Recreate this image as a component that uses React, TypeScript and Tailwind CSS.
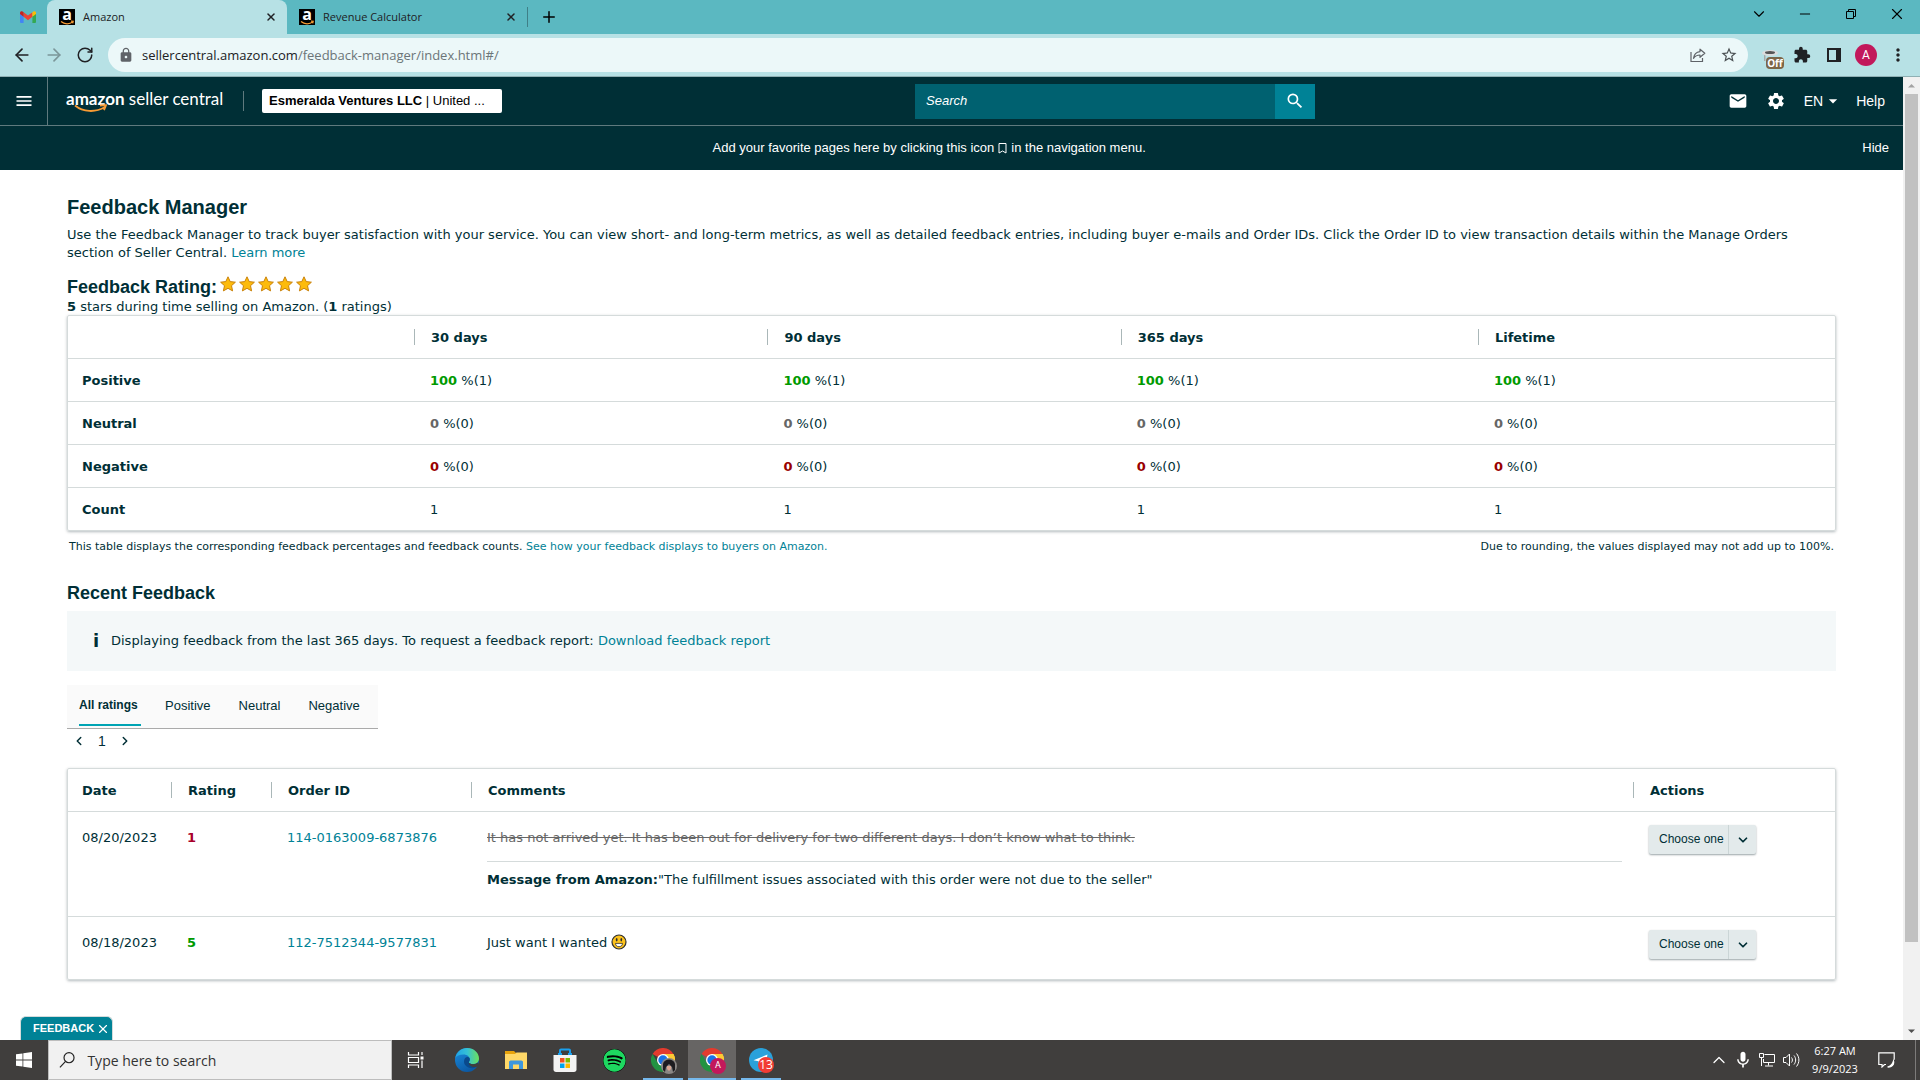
import React from 'react';
import { ArrowLeft, ArrowRight, RotateCw, Plus, Minus, X, ChevronDown, ChevronLeft, ChevronRight, ChevronUp } from 'lucide-react';
import { MdMail, MdSettings, MdSearch, MdLock, MdExtension, MdMoreVert, MdStarBorder, MdMenu, MdArrowDropDown, MdMic } from 'react-icons/md';
import { FaSpotify } from 'react-icons/fa';

interface MetricRow {
  label: string;
  color: string;
  values: [string, string][];
}

interface FeedbackEntry {
  date: string;
  rating: string;
  ratingColor: string;
  orderId: string;
  comment: string;
  struck: boolean;
  message?: string;
}

const periods = ['30 days', '90 days', '365 days', 'Lifetime'];

const metrics: MetricRow[] = [
  { label: 'Positive', color: 'text-[#009a00]', values: periods.map(() => ['100', ' %(1)']) },
  { label: 'Neutral', color: 'text-[#666666]', values: periods.map(() => ['0', ' %(0)']) },
  { label: 'Negative', color: 'text-[#990000]', values: periods.map(() => ['0', ' %(0)']) },
  { label: 'Count', color: '', values: periods.map(() => ['', '1']) },
];

const entries: FeedbackEntry[] = [
  {
    date: '08/20/2023',
    rating: '1',
    ratingColor: 'text-[#a8002a]',
    orderId: '114-0163009-6873876',
    comment: 'It has not arrived yet. It has been out for delivery for two different days. I don’t know what to think.',
    struck: true,
    message: '"The fulfillment issues associated with this order were not due to the seller"',
  },
  {
    date: '08/18/2023',
    rating: '5',
    ratingColor: 'text-[#009a00]',
    orderId: '112-7512344-9577831',
    comment: 'Just want I wanted',
    struck: false,
  },
];

const link = 'text-[#008296]';

/* ---------- drawings ---------- */

const GmailIcon = () => (
  <svg viewBox="0 0 16 12" className="w-4 h-3">
    <path d="M0 1.5V11a1 1 0 0 0 1 1h2.6V5.5z" fill="#4285f4" />
    <path d="M16 1.5V11a1 1 0 0 1-1 1h-2.6V5.5z" fill="#34a853" />
    <path d="M3.6 1.2 8 4.6l4.4-3.4v4.6L8 9.2 3.6 5.8z" fill="#ea4335" />
    <path d="M0 2c0-1.800 2-2.500 3.600-.8v4.600L0 3z" fill="#c5221f" />
    <path d="M16 2c0-1.800-2-2.500-3.600-.8v4.600L16 3z" fill="#fbbc04" />
  </svg>
);

const AmazonFavicon = () => (
  <span className="relative flex w-4 h-4 justify-center bg-black text-white shrink-0">
    <span className="font-['Open_Sans',sans-serif] font-bold text-base leading-[11px]">a</span>
    <svg viewBox="0 0 16 16" className="absolute inset-0 w-4 h-4" fill="none" stroke="#f79b34" strokeWidth="1.200">
      <path d="M2 12.500c3.500 3 8.500 3 12 .3M12 12.200l2.200.2-.5 2" />
    </svg>
  </span>
);

const ShareIcon = () => (
  <svg viewBox="0 0 16 16" className="w-4 h-4" fill="none" stroke="#5f6368" strokeWidth="1.200">
    <path d="M1 5v9.500h11.500V11" />
    <path d="M10 2.200 14.800 6.300 10 10.300V8C7 8 5 9 3.500 11.300 4 7.500 6.300 5 10 4.600z" strokeLinejoin="round" />
  </svg>
);

const RestoreIcon = () => (
  <svg viewBox="0 0 12 12" className="w-3 h-3" fill="none" stroke="#000" strokeWidth="1">
    <path d="M1.500 3.500h7v7h-7zM3.500 3.500v-2h7v7h-2" />
  </svg>
);

const CloserExtension = () => (
  <span className="relative block w-6 h-6">
    <svg viewBox="0 0 24 24" className="w-6 h-6">
      <path d="M5 9h2.500v9H6V12z" fill="#a9a9a9" />
      <ellipse cx="12" cy="10" rx="8" ry="3" fill="#dcdcdc" />
      <ellipse cx="12" cy="9.500" rx="5" ry="1.500" fill="#555" />
    </svg>
    <span className="absolute left-2 top-3.5 w-[18px] h-3 rounded-sm bg-[#7d6648] text-white font-['Open_Sans',sans-serif] font-bold text-[10px] leading-3 text-center">Off</span>
  </span>
);

const Star = () => (
  <svg viewBox="0 0 16 16" className="w-4 h-4">
    <path d="M8 .8l2.200 4.800 5.200.6-3.900 3.500 1.100 5.200L8 12.300l-4.600 2.600 1.100-5.200L.6 6.200l5.200-.6z" fill="#fdbb0c" stroke="#c9820c" strokeWidth="1" strokeLinejoin="round" />
  </svg>
);

const Smiley = () => (
  <svg viewBox="0 0 16 16" className="inline w-4 h-4 align-text-bottom">
    <circle cx="8" cy="8" r="7" fill="#fcc21b" stroke="#2f2f2f" strokeWidth="1.200" />
    <ellipse cx="5.700" cy="5.700" rx=".9" ry="1.800" fill="#2f2f2f" />
    <ellipse cx="10.300" cy="5.700" rx=".9" ry="1.800" fill="#2f2f2f" />
    <path d="M4.500 9.400h7c0 4.400-7 4.400-7 0z" fill="#fff" stroke="#2f2f2f" strokeWidth=".8" />
  </svg>
);

const WindowsLogo = () => (
  <svg viewBox="0 0 16 16" className="w-4 h-4" fill="#fff">
    <path d="M0 2.300 6.500 1.400v6.200H0zM7.300 1.300 16 0v7.600H7.300zM0 8.400h6.500v6.200L0 13.700zM7.300 8.400H16V16l-8.700-1.300z" />
  </svg>
);

const TaskViewIcon = () => (
  <svg viewBox="0 0 18 16" className="w-[18px] h-4" fill="none" stroke="#fff" strokeWidth="1.200">
    <path d="M1.500 0v3h10V0M1.500 16v-3h10v3M1.500 5.500h10v5h-10zM15 0v3M15 8.500V16" />
    <path d="M13.500 4.500h3v3h-3z" fill="#fff" stroke="none" />
  </svg>
);

const EdgeIcon = () => (
  <svg viewBox="0 0 24 24" className="w-6 h-6">
    <defs>
      <linearGradient id="edgeTop" x1="0" y1="0.500" x2="1" y2="0.500">
        <stop offset="0" stopColor="#1fa2e8" />
        <stop offset="0.500" stopColor="#35c1d6" />
        <stop offset="1" stopColor="#6ce05a" />
      </linearGradient>
      <linearGradient id="edgeBody" x1="0" y1="0" x2="0.500" y2="1">
        <stop offset="0" stopColor="#1b8fe0" />
        <stop offset="1" stopColor="#0c59a4" />
      </linearGradient>
    </defs>
    <circle cx="12" cy="12" r="12" fill="url(#edgeBody)" />
    <path d="M.3 10C1.500 4 6.200 0 12 0c7 0 12 5 12 10.500 0 3.500-2.600 5.700-5.700 5.700-3.200 0-4.500-1.200-4.500-2 0-.6 1-1 1-3 0-2.400-2.600-4.700-6.300-4.700C4.500 6.500 1.500 8 .3 10z" fill="url(#edgeTop)" />
    <path d="M14.800 11.200c0 2-1 2.400-1 3 0 .8 1.300 2 4.500 2 1.600 0 2.900-.4 3.900-1.200l1.300.8c-.8 1.500-2 3-3.500 4-5.500 1.500-11-1.500-11-6.300 0-2.500 1.500-4.500 3.500-4.500 1.400 0 2.300 1 2.300 2.200z" fill="#0a4a8c" />
    <path d="M13.800 14.200c0 .8 1.300 2 4.500 2 2 0 3.500-.6 4.500-1.600l1.200 2.400-2.200 1.800c-4 1-8.500-1-8-4.600z" fill="#403e3d" />
  </svg>
);

const FolderIcon = () => (
  <svg viewBox="0 0 22 18" className="w-[22px] h-[18px]">
    <path d="M0 0h9l2 2h11v16H0z" fill="#e8a30c" />
    <path d="M0 3h10l1.500-1.500H22V18H0z" fill="#ffd868" />
    <path d="M4 18v-7.500L5.500 9.500h11l1.500 1V18h-4v-4.500H8V18z" fill="#3e97dc" />
  </svg>
);

const StoreIcon = () => (
  <svg viewBox="0 0 24 24" className="w-6 h-6">
    <path d="M.5 7h23v14.500c0 1.500-1 2.500-2.500 2.500H3C1.500 24 .5 23 .5 21.500z" fill="#f3f3f3" />
    <path d="M7 7V2.500C7 1.500 7.500 1.500 8 1.500h8c.5 0 1 0 1 1V7" fill="none" stroke="#1aa0ee" strokeWidth="2" />
    <path d="M5 5h4v2H5zM15 5h4v2h-4z" fill="#1aa0ee" />
    <path d="M7 10h4.500v4.500H7z" fill="#f25022" />
    <path d="M12.500 10H17v4.500h-4.500z" fill="#7fba00" />
    <path d="M7 15.500h4.500V20H7z" fill="#00a4ef" />
    <path d="M12.500 15.500H17V20h-4.500z" fill="#ffb900" />
  </svg>
);

const ChromeIcon = () => (
  <svg viewBox="0 0 24 24" className="w-6 h-6">
    <path d="M12 12 1.600 6A12 12 0 0 1 22.400 6z" fill="#e33b2e" />
    <path d="M12 12V6h10.400A12 12 0 0 1 12 24z" fill="#fcc934" />
    <path d="M17.200 15 12 24A12 12 0 0 1 1.600 6l5.200 9z" fill="#229342" />
    <path d="M17.200 15 12 24a12 12 0 0 0 10.400-18H12z" fill="#fcc934" />
    <circle cx="12" cy="12" r="6" fill="#fff" />
    <circle cx="12" cy="12" r="4.700" fill="#1a73e8" />
  </svg>
);

const TelegramIcon = () => (
  <svg viewBox="0 0 24 24" className="w-6 h-6">
    <circle cx="12" cy="12" r="12" fill="#2aa1da" />
    <path d="M4.500 12.200 18.500 6.500 16.500 17l-4.500-2.700-2 2-.5-3z" fill="#fff" />
  </svg>
);

const ProfilePhoto = () => (
  <svg viewBox="0 0 16 16" className="absolute left-2.5 top-2.5 w-4 h-4">
    <circle cx="8" cy="8" r="8" fill="#8a8785" />
    <path d="M2 12V6c1-6 11-6 12 0v6l-2 2-1-5-3-3-3 3-1 5z" fill="#1d1c20" />
    <path d="M6 8h4v3L8 13l-2-2z" fill="#d9a592" />
  </svg>
);

const NetworkIcon = () => (
  <svg viewBox="0 0 16 14" className="w-4 h-3.5" fill="none" stroke="#fff" strokeWidth="1">
    <path d="M5.500 1.500h10v8h-11V6M9.500 9.500v3M6 13h8M.5 .5h4v4h-4zM2.500 4.500V13" />
  </svg>
);

const VolumeIcon = () => (
  <svg viewBox="0 0 17 14" className="w-[17px] h-3.5" fill="none" stroke="#fff" strokeWidth="1">
    <path d="M.5 4.500h2.500L6.500 1v12L3 9.500H.5zM8.500 4.500c1.200 1.500 1.200 3.500 0 5M11 2.500c2.200 2.800 2.200 6.200 0 9M13.500 .5c3.200 4 3.200 9 0 13" />
  </svg>
);

const NotificationIcon = () => (
  <svg viewBox="0 0 17 16" className="w-[17px] h-4" fill="none" stroke="#fff" strokeWidth="1.200">
    <path d="M8 12.500H6.500L4 15v-2.500H.8V.8h15.400v7" />
    <path d="M15.500 9c1 4-2 6.500-6 6 3-.5 5-2.500 6-6z" fill="#fff" />
  </svg>
);

/* ---------- browser ---------- */

const BrowserTab = ({ title, active }: { title: string; active?: boolean }) => (
  <div className={`flex items-center w-60 h-full pl-3 pr-2.5 text-[#202124] ${active ? 'bg-[#b7e1e5] rounded-t-lg' : ''}`}>
    <AmazonFavicon />
    <span className="ml-2 grow font-['Open_Sans',sans-serif] text-[11px]">{title}</span>
    <button aria-label={`Close ${title}`}>
      <X className="w-3 h-3" strokeWidth={3} />
    </button>
  </div>
);

const TabStrip = () => (
  <div className="flex h-[34px] bg-[#5bb8c1]">
    <div className="flex items-center justify-center w-[47px] pl-2">
      <GmailIcon />
    </div>
    <BrowserTab title="Amazon" active />
    <BrowserTab title="Revenue Calculator" />
    <div className="w-px h-5 mt-[7px] bg-[#3f7f87]"></div>
    <button aria-label="New tab" className="px-3">
      <Plus className="w-[18px] h-[18px]" strokeWidth={2} />
    </button>
    <div className="ml-auto flex items-start pt-1.5 text-black">
      <button aria-label="Search tabs" className="flex w-[46px] h-4 items-center justify-center"><ChevronDown className="w-[18px] h-[18px]" strokeWidth={1.5} /></button>
      <button aria-label="Minimize" className="flex w-[46px] h-4 items-center justify-center"><Minus className="w-4 h-4" strokeWidth={1.5} /></button>
      <button aria-label="Restore" className="flex w-[46px] h-4 items-center justify-center"><RestoreIcon /></button>
      <button aria-label="Close" className="flex w-[46px] h-4 items-center justify-center"><X className="w-[18px] h-[18px]" strokeWidth={1.5} /></button>
    </div>
  </div>
);

const Toolbar = () => (
  <div className="flex items-center h-[43px] bg-[#b7e1e5] border-b border-[#8fb0b4] pl-3 pr-1.5 text-[#202124]">
    <button aria-label="Back"><ArrowLeft className="w-5 h-5" strokeWidth={2} /></button>
    <button aria-label="Forward" className="ml-3 text-[#7b9699]"><ArrowRight className="w-5 h-5" strokeWidth={2} /></button>
    <button aria-label="Reload" className="ml-3"><RotateCw className="w-[18px] h-[18px]" strokeWidth={2} /></button>
    <div className="flex items-center grow h-[34px] ml-3.5 px-2.5 rounded-full bg-[#ecf8f9]">
      <MdLock className="w-4 h-4 text-[#5f6368]" />
      <p className="ml-2 pt-0.5 grow font-['Open_Sans',sans-serif] text-[13px]">
        sellercentral.amazon.com<span className="text-[#6b7578]">/feedback-manager/index.html#/</span>
      </p>
      <button aria-label="Share"><ShareIcon /></button>
      <button aria-label="Bookmark" className="ml-3.5"><MdStarBorder className="w-[18px] h-[18px] text-[#4b5154]" /></button>
    </div>
    <div className="flex items-center ml-1.5 *:flex *:w-8 *:justify-center">
      <div><CloserExtension /></div>
      <div><MdExtension className="w-[18px] h-[18px]" /></div>
      <div>
        <svg viewBox="0 0 14 14" className="w-3.5 h-3.5">
          <path d="M1 1h12v12H1z" fill="none" stroke="#202124" strokeWidth="2" />
          <path d="M9 0h5v14H9z" fill="#202124" />
        </svg>
      </div>
      <div>
        <span className="flex items-center justify-center w-[22px] h-[22px] rounded-full bg-[#c2185b] text-white font-[Roboto,sans-serif] text-xs">A</span>
      </div>
      <button aria-label="Menu"><MdMoreVert className="w-5 h-5" /></button>
    </div>
  </div>
);

/* ---------- seller central ---------- */

const SellerHeader = () => (
  <header className="bg-[#002f36] text-white font-['Liberation_Sans',Arial,sans-serif]">
    <div className="relative flex items-center h-[49px] border-b border-[#5f7a7e]">
      <button aria-label="Navigation" className="flex items-center justify-center w-12 h-full border-r border-[#5f7a7e]">
        <MdMenu className="w-5 h-5" />
      </button>
      <a href="#" className="relative ml-[18px] w-[160px] whitespace-nowrap font-[Lato,sans-serif] text-[17px] leading-6 pb-1">
        <b>amazon</b> seller central
        <svg viewBox="0 0 34 9" className="absolute left-2 top-[17px] w-[34px] h-[9px]" fill="none" stroke="#f79b34" strokeWidth="1.800">
          <path d="M1 1.500c8 6.500 20 7.500 30 1.500M26 1.500l6-.3-2 5" />
        </svg>
      </a>
      <div className="w-px h-5 ml-[17px] bg-[#5f7a7e]"></div>
      <button className="ml-[18px] w-60 h-6 rounded-xs bg-white text-black text-left text-[13px] px-[7px] whitespace-nowrap overflow-hidden">
        <b>Esmeralda Ventures LLC</b> | United ...
      </button>
      <form className="absolute left-[915px] flex w-[400px] h-[35px]">
        <input aria-label="Search" placeholder="Search" className="grow bg-[#006170] px-[11px] text-[13px] italic placeholder:text-white outline-none" />
        <button type="button" aria-label="Go" className="flex items-center justify-center w-10 bg-[#008296]">
          <MdSearch className="w-5 h-5" />
        </button>
      </form>
      <nav className="ml-auto flex items-center pr-[18px] text-sm">
        <a href="#" aria-label="Messages"><MdMail className="w-5 h-5" /></a>
        <a href="#" aria-label="Settings" className="ml-[18px]"><MdSettings className="w-5 h-5" /></a>
        <button className="flex items-center ml-[18px]">EN<MdArrowDropDown className="w-5 h-5" /></button>
        <a href="#" className="ml-[13px]">Help</a>
      </nav>
    </div>
    <div className="flex items-center h-11 text-[13px]">
      <p className="grow flex items-center justify-center">
        Add your favorite pages here by clicking this icon
        <svg viewBox="0 0 9 11" className="w-[9px] h-[11px] mx-1" fill="none" stroke="#fff" strokeWidth="1">
          <path d="M1 .5h7v9.500L4.500 8 1 10z" />
        </svg>
        in the navigation menu.
      </p>
      <button className="pl-1 pr-3.5">Hide</button>
    </div>
  </header>
);

const HeadCell = ({ children, first, className = '' }: { children?: React.ReactNode; first?: boolean; className?: string }) => (
  <th className={`h-[43px] border-b border-[#d5dbdb] p-0 text-left font-bold ${className}`}>
    <span className={`block h-4 leading-[18px] ${first ? 'pl-3.5' : 'border-l border-[#aab7b8] pl-4'}`}>{children}</span>
  </th>
);

const MetricsTable = () => (
  <div className="border border-[#d5dbdb] rounded-xs shadow-[0_1px_3px_rgba(0,28,36,0.3)]">
    <table className="w-full table-fixed border-separate border-spacing-0">
      <thead>
        <tr>
          <HeadCell first className="w-[346px]" />
          <HeadCell className="w-1/5">30 days</HeadCell>
          <HeadCell className="w-1/5">90 days</HeadCell>
          <HeadCell>365 days</HeadCell>
          <HeadCell>Lifetime</HeadCell>
        </tr>
      </thead>
      <tbody>
        {metrics.map((row) => (
          <tr key={row.label} className="group">
            <th scope="row" className="h-[43px] group-last:h-[42px] border-b border-[#d5dbdb] group-last:border-0 p-0 pt-0.5 pl-3.5 text-left font-bold">{row.label}</th>
            {row.values.map(([bold, rest], i) => (
              <td key={i} className="border-b border-[#d5dbdb] group-last:border-0 p-0 pt-0.5 pl-4">
                <b className={row.color}>{bold}</b>{rest}
              </td>
            ))}
          </tr>
        ))}
      </tbody>
    </table>
  </div>
);

const ActionSelect = ({ orderId }: { orderId: string }) => (
  <div className="relative w-[107px] h-[29px] rounded-xs bg-[#e3eaeb] shadow-[0_1px_2px_rgba(0,28,36,0.4)]">
    <select aria-label={`Action for ${orderId}`} className="w-full h-full appearance-none bg-transparent pl-2.5 pr-7 pb-0.5 font-['Liberation_Sans',Arial,sans-serif] text-xs text-[#002f36]">
      <option>Choose one</option>
    </select>
    <span className="absolute right-0 top-0 flex items-center justify-center w-7 h-full border-l border-[#cbd5d6] pointer-events-none">
      <ChevronDown className="w-3.5 h-3.5" strokeWidth={3} />
    </span>
  </div>
);

const FeedbackTable = () => (
  <div className="border border-[#d5dbdb] rounded-xs shadow-[0_1px_3px_rgba(0,28,36,0.3)]">
    <table className="w-full table-fixed border-separate border-spacing-0">
      <thead>
        <tr>
          <HeadCell first className="w-[103px]">Date</HeadCell>
          <HeadCell className="w-[100px]">Rating</HeadCell>
          <HeadCell className="w-[200px]">Order ID</HeadCell>
          <HeadCell>Comments</HeadCell>
          <HeadCell className="w-[202px]">Actions</HeadCell>
        </tr>
      </thead>
      <tbody>
        {entries.map((entry) => (
          <tr key={entry.orderId} className="group align-top [&>td]:border-b [&>td]:border-[#d5dbdb] last:[&>td]:border-0 [&>td]:pt-[17px]">
            <td className="pl-3.5">{entry.date}</td>
            <td className={`pl-4 font-bold ${entry.ratingColor}`}>{entry.rating}</td>
            <td className="pl-4"><a href="#" className={link}>{entry.orderId}</a></td>
            <td className="pl-4 pr-[11px] pb-[27px]">
              {entry.struck ? <s className="text-[#666666]">{entry.comment}</s> : <span>{entry.comment} <Smiley /></span>}
              {entry.message && (
                <p className="mt-3.5 pt-[9px] border-t border-[#d5dbdb]"><b>Message from Amazon:</b>{entry.message}</p>
              )}
            </td>
            <td className="pl-4"><div className="-mt-1"><ActionSelect orderId={entry.orderId} /></div></td>
          </tr>
        ))}
      </tbody>
    </table>
  </div>
);

const RatingTabs = () => (
  <div className="flex w-fit h-11 gap-6 pl-3 pr-[18px] bg-[#fafafa] border-b border-[#aaaaaa] font-['Liberation_Sans',Arial,sans-serif] text-[13px]">
    <button className="w-[62px] text-left border-b-2 border-[#00a4b4] mb-0.5 font-bold text-xs">All ratings</button>
    <button className="pb-0.5">Positive</button>
    <button className="ml-1 pb-0.5">Neutral</button>
    <button className="ml-1 pb-0.5">Negative</button>
  </div>
);

const FeedbackManager = () => (
  <main className="px-[67px] pt-[25px] text-[#002f36] font-['DejaVu_Sans',Verdana,sans-serif] text-[13px] leading-[18px]">
    <h1 className="font-['Liberation_Sans',Arial,sans-serif] font-bold text-xl leading-6">Feedback Manager</h1>
    <p className="mt-[7px]">
      Use the Feedback Manager to track buyer satisfaction with your service. You can view short- and long-term metrics, as well as detailed feedback entries, including buyer e-mails and Order IDs. Click the Order ID to view transaction details within the Manage Orders section of Seller Central. <a href="#" className={link}>Learn more</a>
    </p>
    <div className="flex items-center mt-3.5">
      <h2 className="font-['Liberation_Sans',Arial,sans-serif] font-bold text-lg leading-[22px]">Feedback Rating:</h2>
      <div className="flex gap-[3px] ml-[3px] pb-1.5"><Star /><Star /><Star /><Star /><Star /></div>
    </div>
    <p className="h-[17px]"><b>5</b> stars during time selling on Amazon. (<b>1</b> ratings)</p>
    <MetricsTable />
    <div className="flex justify-between mt-2 px-0.5 text-[11px] leading-4">
      <p>This table displays the corresponding feedback percentages and feedback counts. <a href="#" className={link}>See how your feedback displays to buyers on Amazon.</a></p>
      <p>Due to rounding, the values displayed may not add up to 100%.</p>
    </div>

    <h2 className="mt-[26px] font-['Liberation_Sans',Arial,sans-serif] font-bold text-lg leading-6">Recent Feedback</h2>
    <div className="flex items-center h-[60px] mt-1.5 pl-[26px] bg-[#f4f8f9]">
      <b className="w-[18px] text-lg">i</b>
      <p>Displaying feedback from the last 365 days. To request a feedback report: <a href="#" className={link}>Download feedback report</a></p>
    </div>
    <div className="mt-3.5"><RatingTabs /></div>
    <div className="flex items-center h-[23px] pl-[5px] gap-3 mb-4">
      <button aria-label="Previous page"><ChevronLeft className="w-3.5 h-3.5" strokeWidth={2.5} /></button>
      <span className="font-['Liberation_Sans',Arial,sans-serif] text-sm">1</span>
      <button aria-label="Next page"><ChevronRight className="w-3.5 h-3.5" strokeWidth={2.5} /></button>
    </div>
    <FeedbackTable />
  </main>
);

const Scrollbar = () => (
  <div className="flex flex-col items-center w-[17px] bg-[#f1f1f1] shrink-0">
    <svg viewBox="0 0 17 17" className="w-[17px] h-[17px]"><path d="M5 10.500h7L8.500 7z" fill="#a3a3a3" /></svg>
    <div className="w-[13px] h-[848px] bg-[#c1c1c1]"></div>
    <svg viewBox="0 0 17 17" className="w-[17px] h-[17px] mt-auto"><path d="M5 6.500h7L8.500 10z" fill="#505050" /></svg>
  </div>
);

/* ---------- taskbar ---------- */

const TaskButton = ({ label, state, children }: { label: string; state?: 'open' | 'active'; children: React.ReactNode }) => (
  <button
    aria-label={label}
    className={`relative flex items-center justify-center w-12 h-full ${state === 'active' ? 'bg-[#676564] border-b-2 border-[#76b9ed] pt-0.5' : ''}`}
  >
    <span className="relative block">{children}</span>
    {state === 'open' && <span className="absolute bottom-0 left-1 right-1 h-0.5 bg-[#76b9ed]"></span>}
  </button>
);

const Taskbar = () => (
  <footer className="flex items-center h-10 bg-[#403e3d] text-white font-['Open_Sans',sans-serif]">
    <TaskButton label="Start"><WindowsLogo /></TaskButton>
    <label className="flex items-center w-[344px] h-full px-2.5 bg-[#f1f1f1] border border-[#bdbdbd] text-[#333]">
      <svg viewBox="0 0 18 18" className="w-[18px] h-[18px]" fill="none" stroke="#222" strokeWidth="1.300">
        <circle cx="11" cy="6.500" r="5.500" />
        <path d="M7.200 10.500 1 17" />
      </svg>
      <input aria-label="Type here to search" placeholder="Type here to search" className="ml-3 pt-0.5 w-full bg-transparent text-sm placeholder:text-[#333] outline-none" />
    </label>
    <div className="flex h-full mr-[3px]"><TaskButton label="Task view"><TaskViewIcon /></TaskButton></div>
    <div className="flex h-full gap-px">
      <TaskButton label="Edge"><EdgeIcon /></TaskButton>
      <TaskButton label="File Explorer"><FolderIcon /></TaskButton>
      <TaskButton label="Store"><StoreIcon /></TaskButton>
      <TaskButton label="Spotify"><FaSpotify className="w-[23px] h-[23px] text-[#1ed760] bg-black rounded-full" /></TaskButton>
      <TaskButton label="Chrome" state="open"><ChromeIcon /><ProfilePhoto /></TaskButton>
      <TaskButton label="Chrome, profile A" state="active">
        <ChromeIcon />
        <span className="absolute left-2.5 top-2.5 flex items-center justify-center w-4 h-4 rounded-full bg-[#c2185b] text-[9px] font-[Roboto,sans-serif]">A</span>
      </TaskButton>
      <TaskButton label="Telegram" state="open">
        <TelegramIcon />
        <span className="absolute left-[9px] top-[9px] flex items-center justify-center w-4 h-4 rounded-full bg-[#f23c34] text-xs leading-4">13</span>
      </TaskButton>
    </div>
    <div className="ml-auto flex items-center h-full">
      <ChevronUp className="w-5 h-5" strokeWidth={1.5} />
      <MdMic className="w-5 h-5 ml-1" />
      <div className="ml-1.5"><NetworkIcon /></div>
      <div className="ml-2"><VolumeIcon /></div>
      <div className="w-[70px] text-center text-[11px] leading-[18px]">
        <p>6:27 AM</p>
        <p>9/9/2023</p>
      </div>
      <div className="ml-2"><NotificationIcon /></div>
      <div className="ml-5 w-[5px] h-full border-l border-[#7d7b7a]"></div>
    </div>
  </footer>
);

export default function App() {
  return (
    <div className="flex flex-col min-h-screen bg-white">
      <TabStrip />
      <Toolbar />
      <div className="flex grow">
        <div className="relative grow min-w-0">
          <SellerHeader />
          <FeedbackManager />
          <button className="absolute left-5 bottom-0 flex items-center h-6 w-[93px] pl-3 gap-0.5 rounded-t-md bg-[#008296] border border-b-0 border-[#d5dbdb] text-white font-['Liberation_Sans',Arial,sans-serif] font-bold text-[11px]">
            FEEDBACK <X className="w-3.5 h-3.5" strokeWidth={2} />
          </button>
        </div>
        <Scrollbar />
      </div>
      <Taskbar />
    </div>
  );
}
